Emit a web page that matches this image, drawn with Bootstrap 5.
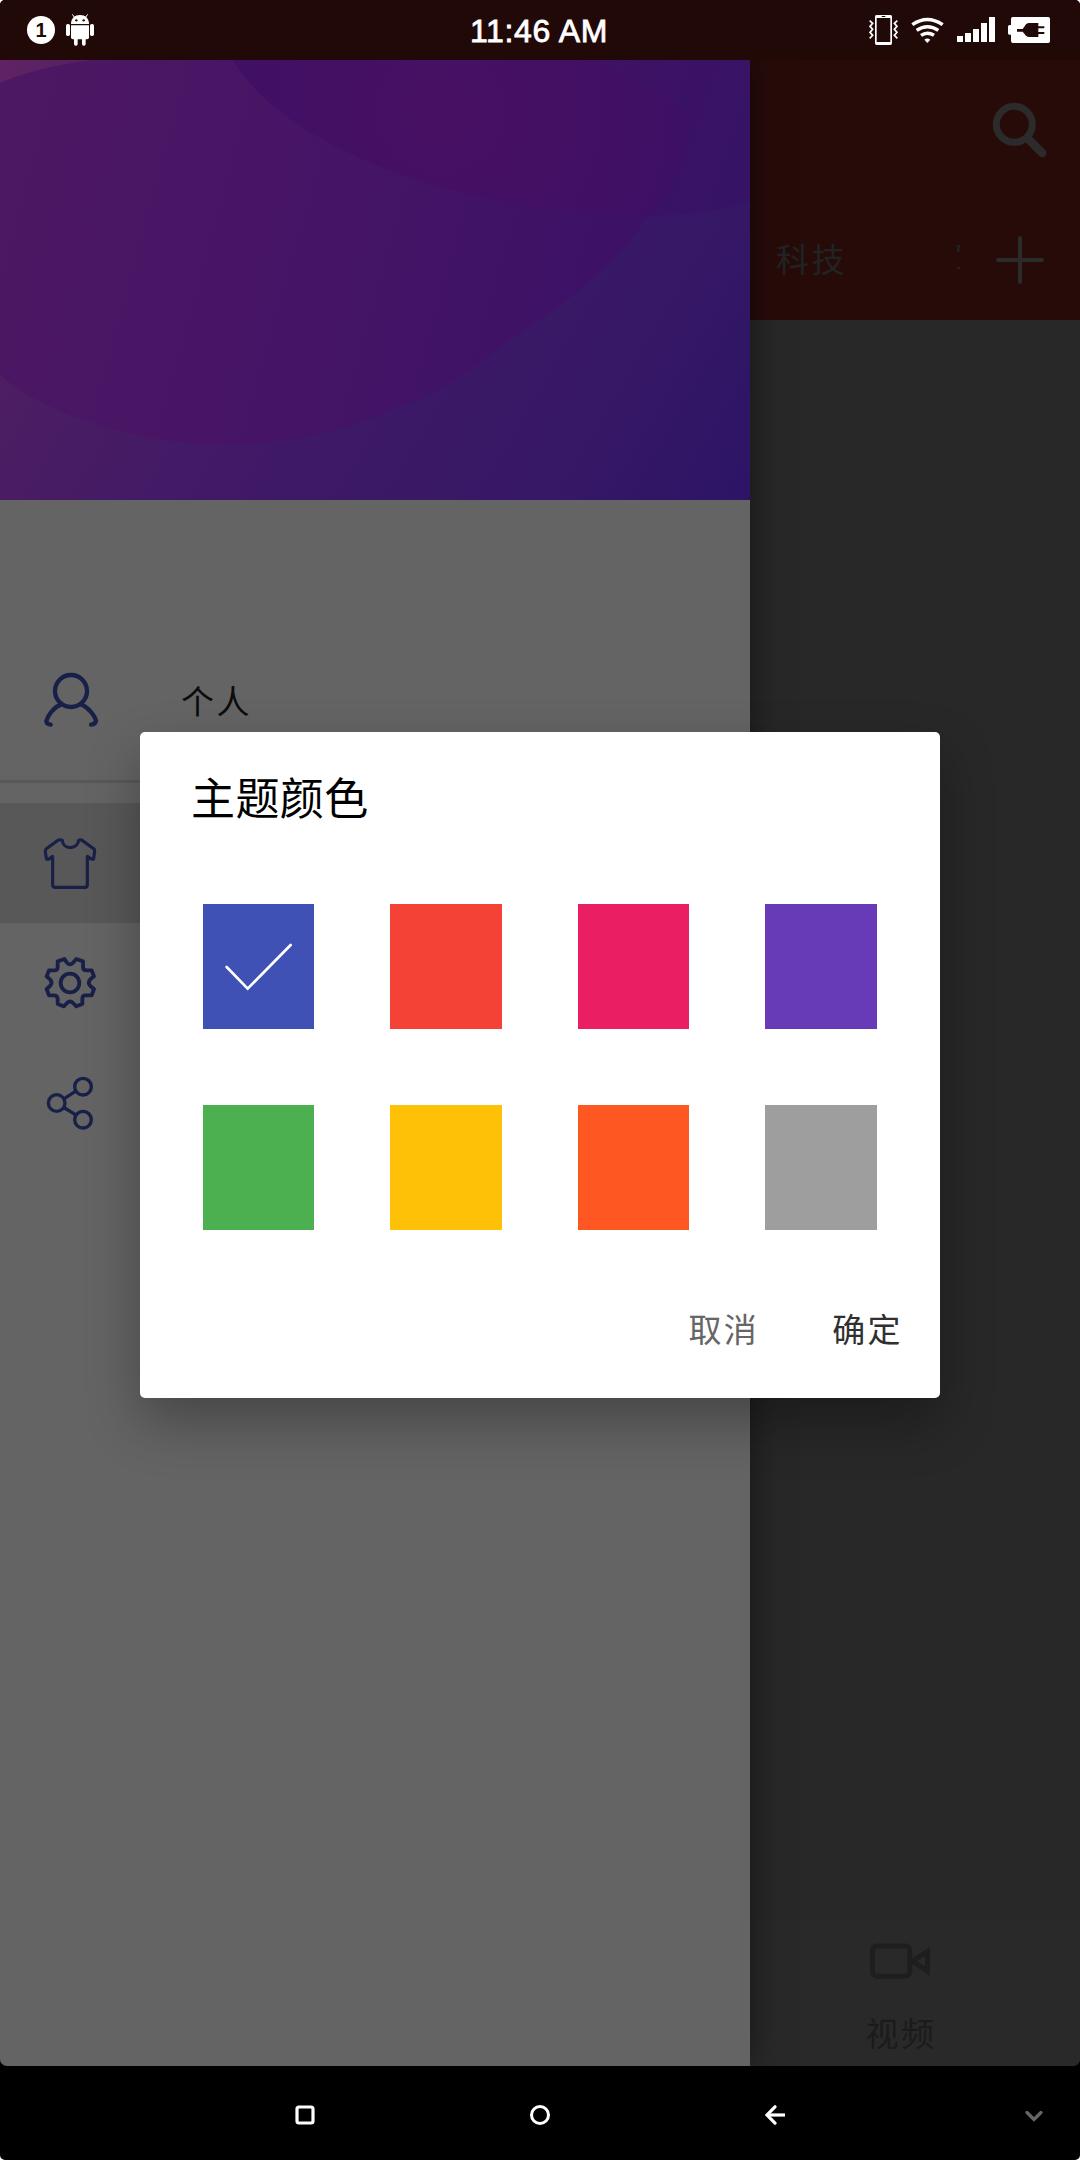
<!DOCTYPE html>
<html lang="zh-CN">
<head>
<meta charset="utf-8">
<meta name="viewport" content="width=device-width, initial-scale=1">
<title>主题颜色</title>
<link href="https://cdn.jsdelivr.net/npm/bootstrap@5.3.0/dist/css/bootstrap.min.css" rel="stylesheet">
<style>
body{background:#fff;font-family:"Noto Sans CJK SC","Liberation Sans",sans-serif;font-size:33px;line-height:1}
svg{display:block;flex:none}
.phone{width:1080px;height:2160px;border-radius:5px;background:#000}
.statusbar{height:60px;background:#210908;padding:0 29px 0 27px;color:#fff}
.android{margin-left:10px}
.wifi{margin:0 12px}
.battery{margin-left:11px}
.clock{font:32px/1 "Liberation Sans",sans-serif;letter-spacing:.65px;-webkit-text-stroke:.8px #fff;left:470px;top:15px;white-space:nowrap}
.notice{width:28px;height:28px;background:#fff;color:#210908;font:bold 20px/28px "Liberation Sans",sans-serif}
.screen{height:2006px;border-radius:0 0 7px 7px;background:#282828}
.drawer{width:750px;background:#646464;box-shadow:0 0 32px rgba(0,0,0,.5);z-index:2;clip-path:inset(0 -60px 0 0)}
.menu{padding-top:100px}
.entry{height:120px;padding-left:40px}
.entry.personal{height:180px;padding-top:20px}
.entry span{margin-left:81px;letter-spacing:2.4px;color:#0c0c0c}
.entry.active{background:#585858}
.rule{height:3px;background:#585858;margin-bottom:20px}
.line{fill:none;stroke:#192048;stroke-linecap:round;stroke-linejoin:round}
.behind{width:330px}
.appbar{height:260px;background:#270b09;color:#202424}
.tools{height:140px;padding-right:30px}
.tabs{width:210px;height:120px;padding:0 0 3px 26px;letter-spacing:2.4px;margin-right:30px}
.tabs span + span{margin-left:108px}
.bottomtab{height:146px;background:#292929;color:#1b1b1b;padding:11px 30px 0 0}
.bottomtab span{letter-spacing:2.4px;margin:25px 0 0 2px}
.dialog{left:140px;top:732px;width:800px;height:666px;border-radius:5px;background:#fff;z-index:5;box-shadow:0 24px 54px rgba(0,0,0,.3)}
.dialog h1{font-size:44px;font-weight:400;line-height:60px;letter-spacing:.4px;color:#000;margin:34px 0 0 51px}
.swatches{display:grid;grid-template-columns:repeat(4,111.4px);column-gap:76px;row-gap:76px;margin:78px 0 0 63px}
.swatch{height:125px}
.actions{padding-right:37px;margin-top:68px;gap:73px}
.actions .btn{color:#666;font-size:33px;line-height:60px;letter-spacing:2.4px}
.actions .btn.ok{color:#303030}
.navkeys{height:94px;padding:4px 36px 0 295px}
.navkeys .space{width:215px}
</style>
<script src="https://cdn.jsdelivr.net/npm/bootstrap@5.3.0/dist/js/bootstrap.bundle.min.js"></script>
</head>
<body>
<div class="phone position-relative overflow-hidden d-flex flex-column">
  <header class="statusbar d-flex align-items-center position-relative">
    <div class="notice rounded-circle text-center">1</div>
    <svg class="android" width="30" height="60" viewBox="195 0 90 180" fill="#fff">
      <path d="M213 72C213 55 224 45 240 45S267 55 267 72Z"/><path d="M217 43l7 10M263 43l-7 10" stroke="#fff" stroke-width="3"/>
      <circle cx="229" cy="61" r="3.500" fill="#210908"/><circle cx="251" cy="61" r="3.500" fill="#210908"/>
      <path d="M213 76H267V112Q267 118 261 118H219Q213 118 213 112Z"/>
      <rect x="198" y="72" width="12" height="36" rx="5"/><rect x="270" y="72" width="12" height="36" rx="5"/>
      <rect x="222" y="110" width="11" height="27" rx="5"/><rect x="246" y="110" width="11" height="27" rx="5"/>
    </svg>
    <div class="clock position-absolute">11:46 AM</div>
    <div class="d-flex ms-auto">
      <svg width="30" height="60" viewBox="87 0 90 180" fill="none" stroke="#fff">
        <path fill="#fff" fill-rule="evenodd" stroke="none" d="M109 45H152Q156 45 156 50V130Q156 135 151 135H110Q105 135 105 130V50Q105 45 109 45ZM110 54V126H151V54ZM125 48V51H136V48Z"/>
        <path stroke-width="5" d="M89 62l9 8-8 9 8 9-8 9 8 9-9 9M172 62l-9 8 8 9-8 9 8 9-8 9 9 9"/>
      </svg>
      <svg class="wifi" width="33" height="60" viewBox="213 0 99 180" fill="none" stroke="#fff" stroke-width="10.500">
        <path d="M217 74Q262 43 308 74M230 91Q262 69 295 91M243 106Q262 93 282 106"/><path d="M253 119Q262 112 271 119L262 129Z" fill="#fff" stroke="none"/>
      </svg>
      <svg width="40" height="60" viewBox="348 0 120 180" fill="#fff"><path d="M351 108h18v18h-18zM375 99h18v27h-18zM399 87h18v39h-18zM423 69h18v57h-18zM447 51h18v75h-18z"/></svg>
      <svg class="battery" width="44" height="60" viewBox="501 0 132 180" fill="#fff">
        <path d="M518 51H625Q630 51 630 56V124Q630 129 625 129H519Q513 129 513 123V104H508Q504 104 504 100V80Q504 75 509 75H513V57Q513 51 518 51Z"/>
        <path fill="#210908" d="M531 87H548L558 73Q562 69 568 69H595V79H613V85H595V96H613V102H595V111H568Q562 111 558 107L548 95H531Z"/>
      </svg>
    </div>
  </header>

  <main class="screen d-flex overflow-hidden">
    <aside class="drawer d-flex flex-column">
      <svg width="750" height="440" viewBox="0 0 750 440">
        <defs>
          <linearGradient id="base" gradientUnits="userSpaceOnUse" x1="0" y1="0" x2="750" y2="440"><stop offset="0" stop-color="#602363"/><stop offset=".22" stop-color="#4b1d63"/><stop offset=".5" stop-color="#3f1967"/><stop offset=".78" stop-color="#371866"/><stop offset="1" stop-color="#2d1466"/></linearGradient>
          <linearGradient id="large" gradientUnits="userSpaceOnUse" x1="0" y1="60" x2="650" y2="240"><stop offset="0" stop-color="#4c1863"/><stop offset=".4" stop-color="#481566"/><stop offset="1" stop-color="#3b1166"/></linearGradient>
          <linearGradient id="corner" gradientUnits="userSpaceOnUse" x1="570" y1="0" x2="750" y2="60"><stop offset="0" stop-color="#401164"/><stop offset="1" stop-color="#371366"/></linearGradient>
          <radialGradient id="overlap" gradientUnits="userSpaceOnUse" cx="440" cy="50" r="260"><stop offset="0" stop-color="#481063"/><stop offset=".5" stop-color="#431064"/><stop offset="1" stop-color="#3d1065"/></radialGradient>
          <clipPath id="largeShape"><path d="M0 23Q36 7 92 0H577Q632 13 664 34Q689 50 689 74Q689 105 648 157C620 200 560 250 509 280C470 314 440 330 412 342C355 368 290 385 228 385C140 385 45 355 0 315Z"/></clipPath>
        </defs>
        <path fill="url(#base)" d="M0 0H750V440H0Z"/>
        <path fill="url(#large)" clip-path="url(#largeShape)" d="M0 0H750V440H0Z"/>
        <path fill="url(#corner)" d="M233 0C255 37 300 75 388 110C450 134 560 156 650 156Q710 155 750 142V0Z"/>
        <path fill="url(#overlap)" clip-path="url(#largeShape)" d="M233 0C255 37 300 75 388 110C450 134 560 156 650 156Q710 155 750 142V0Z"/>
      </svg>
      <nav class="menu d-flex flex-column">
        <div class="entry personal d-flex align-items-center">
          <svg class="line" width="60" height="60" viewBox="120 90 180 180" stroke-width="13"><circle cx="213" cy="153" r="48"/><path d="M184 193C163 200 143 226 139 243Q139 252 152 254M243 193C265 202 285 228 288 243Q287 252 273 254"/></svg>
          <span>个人</span>
        </div>
        <div class="rule"></div>
        <div class="entry active d-flex align-items-center">
          <svg class="line" width="60" height="60" viewBox="120 579 180 180" stroke-width="9.500"><path d="M184 600Q180 598 172 602L139 626Q135 629 136 636L139 655Q140 660 146 657L158 649V734Q158 742 166 742H254Q262 742 262 734V649L275 657Q280 660 281 655L284 634Q284 628 281 626L248 602Q242 598 236 601C234 614 224 623 211 623S188 614 187 601Q186 600 184 600Z"/></svg>
        </div>
        <div class="entry d-flex align-items-center">
          <svg class="line" width="60" height="60" viewBox="120 939 180 180" stroke-width="11.500"><path d="M173 964L193 957L201 968Q210 978 219 968L229 957L249 964V982Q249 991 258 991H275L282 1009L271 1018Q262 1028 271 1038L282 1047L275 1066H255Q247 1067 247 1076V1092L229 1099L219 1089Q210 1080 201 1089L192 1099L173 1092V1076Q172 1067 163 1066H147L140 1047L150 1038Q159 1028 150 1018L140 1009L147 991H165Q173 991 173 982Z"/><circle cx="210" cy="1029" r="28"/></svg>
        </div>
        <div class="entry d-flex align-items-center">
          <svg class="line" width="60" height="60" viewBox="120 1299 180 180" stroke-width="10"><circle cx="249" cy="1340" r="25"/><circle cx="170" cy="1389" r="25"/><circle cx="249" cy="1439" r="25"/><path d="M194 1375L226 1354M194 1404L226 1424"/></svg>
        </div>
      </nav>
    </aside>

    <section class="behind d-flex flex-column">
      <div class="appbar">
        <div class="tools d-flex justify-content-end align-items-center">
          <svg width="60" height="60" viewBox="750 120 180 180" fill="none" stroke="#2b2b2b" stroke-linecap="round"><circle cx="823" cy="193" r="54" stroke-width="21"/><path d="M868 240L907 279" stroke-width="25"/></svg>
        </div>
        <div class="d-flex align-items-center">
          <div class="tabs d-flex align-items-center overflow-hidden text-nowrap"><span>科技</span><span>军</span></div>
          <svg width="60" height="60" viewBox="750 510 180 180" stroke="#2b2b2b" stroke-width="12" stroke-linecap="round"><path d="M774 600H906M840 534V666"/></svg>
        </div>
      </div>
      <div class="bottomtab mt-auto d-flex flex-column align-items-center">
        <svg width="60" height="60" viewBox="390 212 180 180" fill="none" stroke="#1e1e1e" stroke-width="15"><rect x="397.500" y="257" width="112" height="91" rx="14"/><path d="M517 302L562.500 273V332Z"/></svg>
        <span>视频</span>
      </div>
    </section>
  </main>

  <footer class="navkeys d-flex align-items-center">
    <svg width="20" height="20" viewBox="0 0 20 20" fill="none" stroke="#fff" stroke-width="3.200"><rect x="2" y="2" width="16" height="16" rx="2"/></svg>
    <div class="space"></div>
    <svg width="20" height="20" viewBox="0 0 20 20" fill="none" stroke="#fff" stroke-width="3"><circle cx="10" cy="10" r="8.500"/></svg>
    <div class="space"></div>
    <svg width="20" height="20" viewBox="0 0 20 20" fill="none" stroke="#fff" stroke-width="3.200"><path d="M20 10H3"/><path stroke-linecap="round" d="M10 1.800L2 10L10 18.200"/></svg>
    <svg class="ms-auto" width="20" height="20" viewBox="0 0 20 20" fill="none" stroke="#666" stroke-width="3.200" stroke-linecap="round"><path d="M3 7.500L10 14.500L17 7.500"/></svg>
  </footer>

  <div class="dialog position-absolute d-flex flex-column" role="dialog">
    <h1>主题颜色</h1>
    <div class="swatches">
      <div class="swatch" style="background:#3f51b5"><svg width="111" height="125" viewBox="609 792 333 375" fill="none" stroke="#fff" stroke-width="8" stroke-linecap="round"><path d="M680 981L743 1046L872 915"/></svg></div>
      <div class="swatch" style="background:#f44336"></div>
      <div class="swatch" style="background:#e91e63"></div>
      <div class="swatch" style="background:#673ab7"></div>
      <div class="swatch" style="background:#4caf50"></div>
      <div class="swatch" style="background:#ffc107"></div>
      <div class="swatch" style="background:#ff5722"></div>
      <div class="swatch" style="background:#9e9e9e"></div>
    </div>
    <div class="actions d-flex justify-content-end">
      <button class="btn p-0 border-0">取消</button>
      <button class="btn p-0 border-0 ok">确定</button>
    </div>
  </div>
</div>
</body>
</html>
